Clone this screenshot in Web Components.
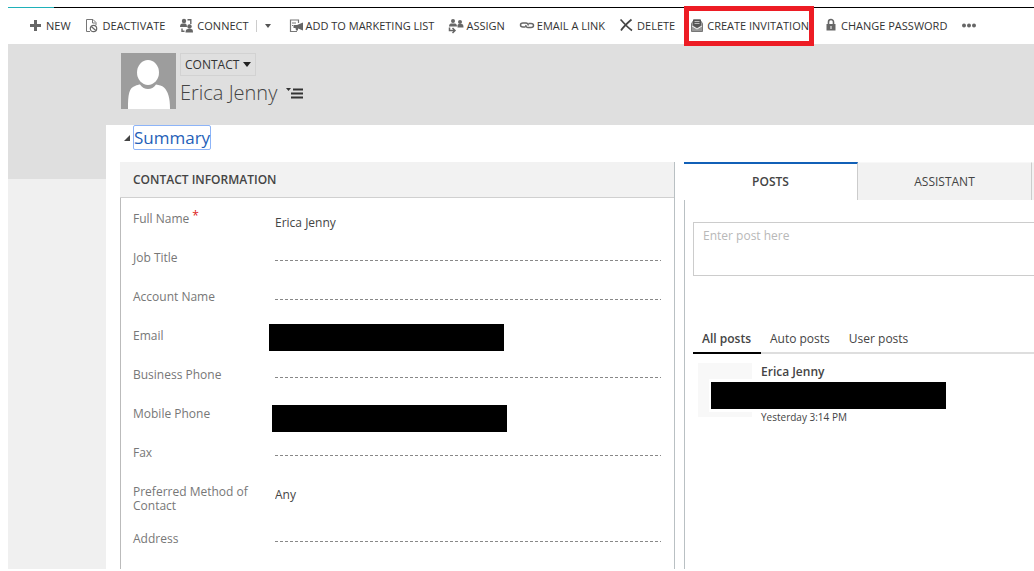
<!DOCTYPE html>
<html lang="en">
<head>
<meta charset="utf-8">
<title>Contact: Erica Jenny</title>
<style>
body { margin: 0; background: #fff; color: #444; font: 12px/14px "Open Sans", "Noto Sans", sans-serif; }
</style>
</head>
<body>
<crm-page>
  <crm-commands slot="commands">
    <crm-command icon="new">NEW</crm-command>
    <crm-command icon="deactivate">DEACTIVATE</crm-command>
    <crm-command icon="connect" menu>CONNECT</crm-command>
    <crm-command icon="marketing">ADD TO MARKETING LIST</crm-command>
    <crm-command icon="assign">ASSIGN</crm-command>
    <crm-command icon="link">EMAIL A LINK</crm-command>
    <crm-command icon="delete">DELETE</crm-command>
    <crm-command icon="invite" marked>CREATE INVITATION</crm-command>
    <crm-command icon="lock">CHANGE PASSWORD</crm-command>
    <crm-command icon="more"></crm-command>
  </crm-commands>
  <crm-record-header slot="header" type="CONTACT">Erica Jenny</crm-record-header>
  <crm-section>
    <span slot="title">Summary</span>
    <crm-card>
      <span slot="title">CONTACT INFORMATION</span>
      <crm-field label="Full Name" value="Erica Jenny" required></crm-field>
      <crm-field label="Job Title"></crm-field>
      <crm-field label="Account Name"></crm-field>
      <crm-field label="Email" redacted="email"></crm-field>
      <crm-field label="Business Phone"></crm-field>
      <crm-field label="Mobile Phone" redacted="phone"></crm-field>
      <crm-field label="Fax"></crm-field>
      <crm-field label="Preferred Method of Contact" value="Any" choice></crm-field>
      <crm-field label="Address"></crm-field>
    </crm-card>
    <crm-social>
      <crm-post author="Erica Jenny">Yesterday 3:14 PM</crm-post>
    </crm-social>
  </crm-section>
</crm-page>

<script>
const base = `<style>
:host, *, *::before, *::after { box-sizing: border-box; }
button, input, select, textarea { font: inherit; color: inherit; margin: 0; padding: 0; border: 0; border-radius: 0; background: none; outline: 0; }
svg { display: block; flex: none; }
</style>`;

function define(name, markup, setup) {
  const template = document.createElement("template");
  template.innerHTML = base + markup;
  customElements.define(name, class extends HTMLElement {
    constructor() {
      super();
      this.attachShadow({ mode: "open" }).append(template.content.cloneNode(true));
    }
    connectedCallback() {
      if (setup) setup(this, this.shadowRoot);
    }
  });
}

const icons = {
  new: '<path d="M6 2h3v4h4v3H9v4H6V9H2V6h4z" fill="#666"/>',
  deactivate: '<path d="M5 13.500H1.500V1.500H8l3 3V7M7.500 1.500V5h3" fill="none" stroke="#777"/><circle cx="8.500" cy="10.500" r="3.200" fill="#fff" stroke="#666" stroke-width="1.200"/><path d="m6.300 8.500 4.500 4" stroke="#666" stroke-width="1.200"/>',
  connect: '<g fill="#666"><circle cx="5" cy="3" r="2.200"/><path d="M1 9C1 6.500 2 5.500 3.500 5.500h2.500c1 0 2 1 2 3.500z"/><circle cx="10.500" cy="8.500" r="2.200"/><path d="M6.500 14.500c0-2.500 1-3.500 2.500-3.500h3c1.500 0 2 1 2 3.500z"/></g><path d="M8.500 1.700h3.300V6M3 10.500v2.800h2.500" fill="none" stroke="#666" stroke-width="1.400"/>',
  marketing: '<path d="M9 13.500H2.500V2h8V5M4 5h4M4 7.500h1" fill="none" stroke="#777" stroke-width="1.200"/><path d="m15 4.500-6 2.500H5.500v3h2L8 12.500h2v-2l5 2z" fill="#666"/>',
  assign: '<g fill="#666"><circle cx="5" cy="3" r="2"/><path d="M1 8.500C1 6.500 2 5.500 3 5.500h4c1 0 2 1 2 3z"/><circle cx="12" cy="4" r="2"/><path d="M9.500 9.500V7l1-1h3c1.500 0 2 1 2 3.500z"/></g><path d="M1.500 9.500v3H6M4.500 10 7 12.500 4.500 15" fill="none" stroke="#666" stroke-width="1.500"/>',
  link: '<path d="M6.500 9H4C2.500 9 1.500 8 1.500 7S2.500 5 4 5h3c1.500 0 2.500 1.500 2 2.500M9.500 5.500H12c1.500 0 2.500 1 2.500 2s-1 2-2.500 2H9C7.500 9.500 6.500 8 7 7" fill="none" stroke="#666" stroke-width="1.500"/>',
  delete: '<path d="M1.500 1.500c3 3 7 8 11.500 11M12.500 1.500C9 4.500 4.500 8.500 2 12.500" fill="none" stroke="#444" stroke-width="1.700"/>',
  invite: '<path d="M2.500 5.500 5 2h6l2.500 3.500v8h-11z" fill="#999" stroke="#777"/><path d="M4 1.500h8v6L8 10 4 7.500z" fill="#555"/><path d="M5.500 3.500h5M5.500 5.500h5" stroke="#bbb"/><path d="m3 8 5 3 5-3" fill="none" stroke="#eee"/>',
  lock: '<path d="M5.500 6.500V4a2.500 2.500 0 0 1 5 0v2.500" fill="none" stroke="#666" stroke-width="1.600"/><path d="M3.500 6h9v6.500h-9z" fill="#666"/><path d="M8 8v3" stroke="#fff"/>',
  more: '<g fill="#666"><circle cx="3" cy="7.500" r="2"/><circle cx="8" cy="7.500" r="2"/><circle cx="13" cy="7.500" r="2"/></g>'
};

define("crm-page", `<style>
:host { display: flex; flex-direction: column; height: 100vh; padding: 7px 0 2px 8px; overflow: hidden; }
.body { flex: 1; min-height: 0; display: grid; grid-template-columns: 98px minmax(0, 1fr); background: #dfdfdf; }
.rail { padding-top: 135px; display: flex; }
.rail div { flex: 1; background: #f0f0f0; }
main { display: flex; flex-direction: column; min-height: 0; }
.content { flex: 1; min-height: 0; overflow: hidden; background: #fff; display: flex; }
</style>
<slot name="commands"></slot>
<div class="body">
  <div class="rail"><div></div></div>
  <main><slot name="header"></slot><div class="content"><slot></slot></div></main>
</div>`);

define("crm-commands", `<style>
:host { display: block; flex: none; }
.line { height: 1px; background: linear-gradient(90deg, #1fb1b9 46px, #000 46px); }
nav { height: 36px; padding-left: 20px; display: flex; align-items: center; gap: 14px; }
</style>
<div class="line"></div><nav aria-label="Commands"><slot></slot></nav>`);

define("crm-command", `<style>
:host { display: flex; position: relative; font-size: 11px; line-height: 16px; white-space: nowrap; color: #333; }
button { display: flex; align-items: center; gap: 2px; }
.menu { display: none; padding: 0 3px 0 7px; align-items: center; gap: 8px; }
.menu::before { content: ""; width: 1px; height: 12px; background: #ccc; }
:host([menu]) .menu { display: flex; }
.mark { display: none; position: absolute; inset: -12px -5px; border: 5px solid #ed1c24; pointer-events: none; }
:host([marked]) .mark { display: block; }
</style>
<button class="run" type="button"><svg width="16" height="16" viewBox="0 0 16 16" aria-hidden="true"></svg><slot></slot></button>
<button class="menu" type="button" aria-label="More options"><svg width="6" height="4"><path d="M0 0h6L3 4z" fill="#555"/></svg></button>
<span class="mark"></span>`, (host, root) => {
  root.querySelector("svg").innerHTML = icons[host.getAttribute("icon")];
  if (!host.textContent) root.querySelector(".run").setAttribute("aria-label", "More commands");
});

define("crm-record-header", `<style>
:host { display: flex; flex: none; height: 81px; padding: 9px 15px; gap: 4px; }
.type { display: flex; align-items: center; gap: 4px; height: 23px; padding: 0 4px; border: 1px solid #d2d2d2; color: #333; }
.name { display: flex; align-items: center; gap: 9px; }
h1 { margin: 0; font-size: 20px; line-height: 34px; font-weight: 300; }
</style>
<svg width="55" height="56" viewBox="0 0 55 56" role="img" aria-label="Contact picture"><path d="M0 0h55v56H0z" fill="#9d9d9d"/><ellipse cx="27" cy="19.500" rx="11" ry="12.500" fill="#fff"/><path d="M7 56c0-15 1-21 7-23 2-1 4-1.500 5-1.500 4 6 12 6 16 0 3 .5 6 1 8 3 4 4 6 10 6 21.500z" fill="#fff"/></svg>
<div>
  <button class="type" type="button"><span></span><svg width="8" height="5"><path d="M0 0h8L4 5z" fill="#222"/></svg></button>
  <div class="name"><h1><slot></slot></h1><button type="button" aria-label="Switch record"><svg width="17" height="12"><path d="M0 1h5L2.500 4z" fill="#333"/><path d="M7 2.500h10M5 6.500h12M5 10.500h12" stroke="#333" stroke-width="2"/></svg></button></div>
</div>`, (host, root) => {
  root.querySelector("span").textContent = host.getAttribute("type");
});

define("crm-section", `<style>
:host { flex: 1; min-width: 0; display: flex; flex-direction: column; padding-left: 14px; }
h2 { margin: 0; height: 37px; flex: none; display: flex; align-items: flex-start; font-weight: 400; }
h2 svg { margin: 10px 3px 0 4px; }
button { height: 25px; font-size: 17px; line-height: 23px; color: #1f5fb8; border: 1px solid #8db4f8; border-radius: 2px; }
.columns { flex: 1; min-height: 0; display: grid; grid-template-columns: minmax(0, 555fr) minmax(0, 350fr); column-gap: 9px; }
</style>
<h2><svg width="6" height="6"><path d="M6 0v6H0z" fill="#444"/></svg><button type="button"><slot name="title"></slot></button></h2>
<div class="columns"><slot></slot></div>`);

define("crm-card", `<style>
:host { display: flex; flex-direction: column; min-height: 0; border-right: 1px solid #b9c0c3; }
h3 { flex: none; margin: 0; padding-left: 13px; height: 36px; font-size: 12px; line-height: 36px; font-weight: 600; color: #444; background: #f2f2f2; border-bottom: 1px solid #d0d0d0; }
.fields { flex: 1; padding: 14px 13px 0 12px; border-left: 1px solid #bbb; }
</style>
<h3><slot name="title"></slot></h3><div class="fields"><slot></slot></div>`);

define("crm-field", `<style>
:host { display: grid; grid-template-columns: 142px minmax(0, 1fr); align-items: start; min-height: 39px; padding-bottom: 19px; }
label { color: #777; padding-right: 20px; }
sup { color: #d22; font-size: 12px; line-height: 0; vertical-align: 3px; margin-left: 3px; }
.value { position: relative; height: 20px; }
input, select { display: block; width: 100%; height: 20px; appearance: none; opacity: 1; }
.empty { background: repeating-linear-gradient(90deg, #888 0 3px, transparent 3px 5px) 0 9px / 100% 1px no-repeat; }
.bar { position: absolute; width: 235px; height: 27px; background: #000; }
.bar.email { left: -6px; top: -5px; }
.bar.phone { left: -3px; top: -2px; }
</style>
<label for="control"></label><div class="value"></div>`, (host, root) => {
  const label = root.querySelector("label");
  const holder = root.querySelector(".value");
  const value = host.getAttribute("value") || "";
  label.textContent = host.getAttribute("label");
  if (host.hasAttribute("required")) {
    const star = document.createElement("sup");
    star.textContent = "*";
    label.append(star);
  }
  const control = document.createElement(host.hasAttribute("choice") ? "select" : "input");
  control.id = "control";
  if (host.hasAttribute("choice")) control.add(new Option(value));
  else control.value = value;
  holder.replaceChildren(control);
  if (host.hasAttribute("redacted")) {
    const bar = document.createElement("div");
    bar.className = "bar " + host.getAttribute("redacted");
    holder.append(bar);
  } else if (!value) control.className = "empty";
});

define("crm-social", `<style>
:host { display: flex; flex-direction: column; min-width: 0; min-height: 0; overflow: hidden; }
.tabs { flex: none; display: grid; grid-template-columns: repeat(3, 174px); height: 38px; }
.tabs button { background: #f2f2f2; border-right: 1px solid #ccc; border-top: 1px solid #f8f8f8; color: #444; }
.tabs .on { background: #fff; border-top: 2px solid #1160b7; font-weight: 600; }
.panel { flex: 1; border-left: 1px solid #b9c0c3; padding: 22px 0 0 8px; }
textarea { display: block; width: calc(100% + 1px); height: 54px; padding: 6px 9px; resize: none; border: 1px solid #ccc; }
textarea::placeholder { color: #b8b8b8; opacity: 1; }
.filters { display: flex; margin-top: 49px; height: 29px; border-bottom: 2px solid #dedede; }
.filters button { height: 29px; padding: 0 10px 1px 9px; }
.filters .on { font-weight: 600; border-bottom: 2px solid #000; padding-bottom: 0; }
.feed { padding: 9px 5px; }
</style>
<div class="tabs" role="tablist"><button class="on" role="tab" aria-selected="true">POSTS</button><button role="tab">ASSISTANT</button><button role="tab" aria-label="More"></button></div>
<div class="panel">
  <textarea placeholder="Enter post here" aria-label="Enter post here"></textarea>
  <div class="filters"><button class="on" type="button">All posts</button><button type="button">Auto posts</button><button type="button">User posts</button></div>
  <div class="feed"><slot></slot></div>
</div>`);

define("crm-post", `<style>
:host { position: relative; display: flex; gap: 9px; }
.avatar { width: 54px; height: 54px; background: #f8f8f8; }
.text { display: flex; flex-direction: column; justify-content: space-between; height: 61px; padding-top: 2px; }
b { font-weight: 600; }
time { font-size: 10px; }
.bar { position: absolute; left: 11px; top: 16px; width: 239px; height: 33px; background: #000; border: solid #fff; border-width: 3px 2px; }
</style>
<div class="avatar"></div><div class="text"><b></b><time><slot></slot></time></div><div class="bar"></div>`, (host, root) => {
  root.querySelector("b").textContent = host.getAttribute("author");
});
</script>
</body>
</html>
